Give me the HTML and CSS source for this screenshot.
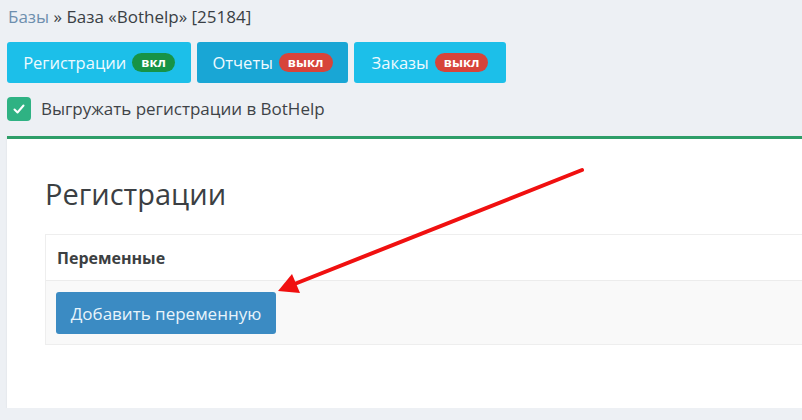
FILE: index.html
```html
<!DOCTYPE html>
<html lang="ru">
<head>
    <meta charset="UTF-8">
    <title>База «Bothelp»</title>
    <link rel="stylesheet" href="styles.css">
</head>
<body>
    <div class="crumbs"><a href="#">Базы</a> » База «Bothelp» [25184]</div>

    <div class="tabs">
        <div class="tab tab-reg">Регистрации <span class="badge on">вкл</span></div>
        <div class="tab tab-rep active">Отчеты <span class="badge off">выкл</span></div>
        <div class="tab tab-ord">Заказы <span class="badge off">выкл</span></div>
    </div>

    <label class="check">
        <span class="box">
            <svg width="14" height="14" viewBox="0 0 14 14"><path d="M2.5 7.5l3 3 6-7" fill="none" stroke="#fff" stroke-width="2" stroke-linecap="round" stroke-linejoin="round"/></svg>
        </span>
        Выгружать регистрации в BotHelp
    </label>

    <div class="card">
        <h2>Регистрации</h2>
        <div class="vars">
            <div class="vars-head">Переменные</div>
            <div class="vars-body">
                <button class="btn">Добавить переменную</button>
            </div>
        </div>
    </div>

    <!-- стрелка поверх -->
    <svg class="arrow" width="802" height="420" viewBox="0 0 802 420">
        <line x1="582" y1="170" x2="292" y2="285" stroke="#f01010" stroke-width="4" stroke-linecap="round"/>
        <polygon points="278,291 292,274 300,293" fill="#f01010"/>
    </svg>
</body>
</html>
```

FILE: styles.css
```css
body {
    margin: 0;
    padding: 0 0 0 7px;
    background: #edf0f4;
    font-family: "Open Sans", Arial, sans-serif;
    color: #3a3f44;
    overflow: hidden;
}
.crumbs {
    padding-top: 6px;
    font-size: 17px;
    line-height: 22px;
    height: 42px;
    box-sizing: border-box;
    margin-left: 1px;
}
.crumbs a {
    color: #6e8fae;
    text-decoration: none;
}
.tabs {
    display: flex;
    gap: 6px;
}
.tab {
    height: 41px;
    display: flex;
    align-items: center;
    justify-content: center;
    gap: 6px;
    background: #1cbfe9;
    color: #eefaff;
    font-size: 16.5px;
    border-radius: 3px;
    box-sizing: border-box;
}
.tab-reg { width: 184px; }
.tab-rep { width: 151px; }
.tab-ord { width: 152px; }
.tab.active {
    background: #19a6d5;
}
.badge {
    font-size: 13px;
    font-weight: bold;
    color: #fff;
    border-radius: 10px;
    padding: 0 9px;
    line-height: 19px;
}
.badge.on { background: #179346; }
.badge.off { background: #d7443a; }
.check {
    display: flex;
    align-items: center;
    gap: 10px;
    margin-top: 14px;
    font-size: 17px;
    line-height: 24px;
    color: #3e4347;
}
.box {
    width: 24px;
    height: 24px;
    border-radius: 4px;
    background: #2fb283;
    display: flex;
    align-items: center;
    justify-content: center;
}
.card {
    margin-top: 15px;
    background: #fff;
    border-top: 3px solid #2e9e68;
    height: 272px;
    box-sizing: border-box;
    padding: 37px 0 0 38px;
    box-shadow: 0 1px 2px rgba(0, 0, 0, 0.08);
}
.card h2 {
    margin: 0;
    font-size: 29px;
    font-weight: normal;
    line-height: 36px;
    color: #3b3f43;
}
.vars {
    margin-top: 22px;
    border: 1px solid #eeeeee;
    border-right: none;
}
.vars-head {
    height: 45px;
    padding-left: 11px;
    display: flex;
    align-items: center;
    font-size: 16px;
    font-weight: bold;
    color: #3c3f42;
    border-bottom: 1px solid #ececec;
}
.vars-body {
    background: #f9f9f9;
    padding: 11px 0 10px 10px;
}
.btn {
    width: 220px;
    height: 42px;
    border: none;
    border-radius: 3px;
    background: #3b8bc3;
    color: #e8f4fb;
    font-family: "Open Sans", Arial, sans-serif;
    font-size: 17px;
}
.arrow {
    position: absolute;
    left: 0;
    top: 0;
    pointer-events: none;
}
```
